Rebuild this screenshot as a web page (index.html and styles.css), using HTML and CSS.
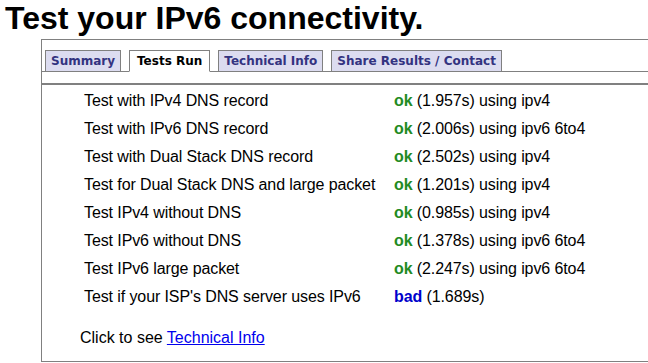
FILE: index.html
```html
<!DOCTYPE html>
<html lang="en">
<head>
    <meta charset="UTF-8">
    <title>Test your IPv6 connectivity.</title>
    <link rel="stylesheet" href="styles.css">
</head>
<body>
    <h1>Test your IPv6 connectivity.</h1>
    <div class="panel">
        <ul class="tabs">
            <li><a href="#">Summary</a></li>
            <li class="active"><a href="#">Tests Run</a></li>
            <li><a href="#">Technical Info</a></li>
            <li><a href="#">Share Results / Contact</a></li>
        </ul>
        <div class="tab-body">
            <table class="tests">
                <tr><td class="name">Test with IPv4 DNS record</td><td><b class="ok">ok</b> (1.957s) using ipv4</td></tr>
                <tr><td class="name">Test with IPv6 DNS record</td><td><b class="ok">ok</b> (2.006s) using ipv6 6to4</td></tr>
                <tr><td class="name">Test with Dual Stack DNS record</td><td><b class="ok">ok</b> (2.502s) using ipv4</td></tr>
                <tr><td class="name">Test for Dual Stack DNS and large packet</td><td><b class="ok">ok</b> (1.201s) using ipv4</td></tr>
                <tr><td class="name">Test IPv4 without DNS</td><td><b class="ok">ok</b> (0.985s) using ipv4</td></tr>
                <tr><td class="name">Test IPv6 without DNS</td><td><b class="ok">ok</b> (1.378s) using ipv6 6to4</td></tr>
                <tr><td class="name">Test IPv6 large packet</td><td><b class="ok">ok</b> (2.247s) using ipv6 6to4</td></tr>
                <tr><td class="name">Test if your ISP's DNS server uses IPv6</td><td><b class="bad">bad</b> (1.689s)</td></tr>
            </table>
            <p class="more">Click to see <a href="#">Technical Info</a></p>
        </div>
    </div>
</body>
</html>
```

FILE: styles.css
```css
/* IPv6 test results page */
body {
    margin: 0;
    font-family: "Liberation Sans", Arial, sans-serif;
    color: #000;
    background: #fff;
    overflow: hidden;
}
h1 {
    margin: 0 0 3px;
    padding: 0 5px;
    font-size: 32px;
    line-height: 36px;
    font-weight: bold;
}
.panel {
    margin-left: 41px;
    width: 700px;
    height: 323px;
    border: 1px solid #808080;
    box-sizing: border-box;
}
.tabs {
    list-style: none;
    margin: 0;
    padding: 10px 0 0 3px;
    display: flex;
    gap: 8px;
    border-bottom: 1px solid #808080;
}
.tabs li {
    margin-bottom: -1px;
}
.tabs a {
    display: block;
    padding: 0 5px;
    height: 20px;
    line-height: 21px;
    font-family: "DejaVu Sans", Verdana, sans-serif;
    font-size: 12px;
    font-weight: bold;
    color: #333380;
    text-decoration: none;
    background: #dcdcf0;
    border: 1px solid #808080;
}
.tabs .active a {
    padding: 0 7px;
    background: #fff;
    color: #000;
    border-bottom-color: #fff;
}
.tab-body {
    margin-top: 11px;
    border-top: 2px solid #808080;
    padding: 2px 0 0 42px;
}
.tests {
    border-collapse: collapse;
    font-size: 16px;
    letter-spacing: -0.1px;
}
.tests td {
    padding: 0;
    height: 28px;
}
.tests .name {
    width: 310px;
}
.ok {
    color: #228b22;
}
.bad {
    color: #0000cc;
}
.more {
    margin: 18px 0 0 -4px;
    font-size: 16px;
}
.more a {
    color: #0000ee;
}
```
